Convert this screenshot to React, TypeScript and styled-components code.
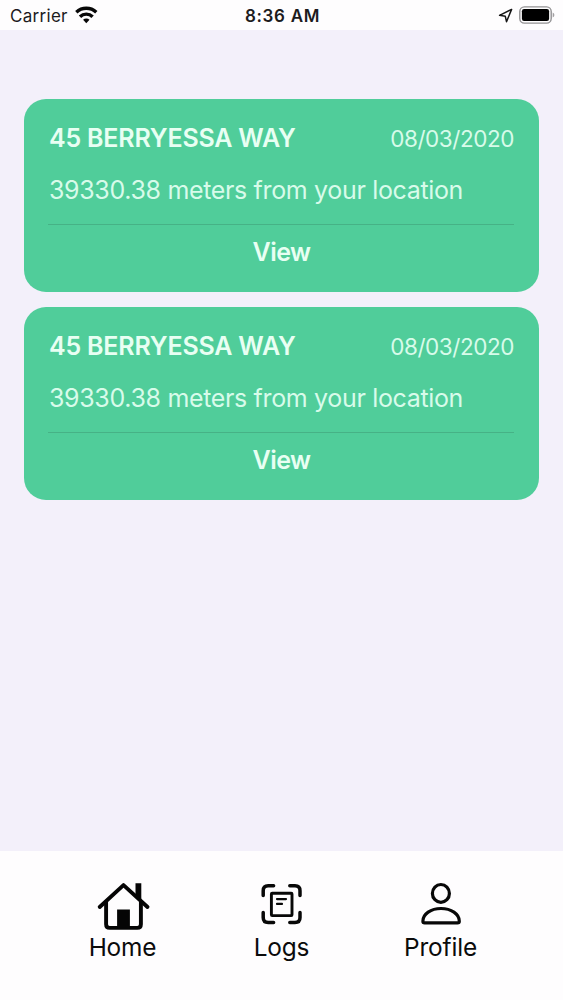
import React from "react";
import styled, { createGlobalStyle } from "styled-components";

const GlobalStyle = createGlobalStyle`
  * { box-sizing: border-box; }
  body { margin: 0; background: #f3f0fa; font-family: Inter, "Liberation Sans", sans-serif; }
`;

const Screen = styled.div`
  display: flex;
  flex-direction: column;
  width: 100%;
  height: 1000px;
  overflow: hidden;
`;

const StatusBar = styled.header`
  display: grid;
  grid-template-columns: 1fr auto 1fr;
  align-items: center;
  height: 30px;
  padding: 1px 8px 0 10px;
  background: #fefdfe;
  color: #1c1b1d;
  font-size: 17px;
  line-height: 30px;
`;

const Carrier = styled.div`
  display: flex;
  align-items: center;
  gap: 7px;
  letter-spacing: 0.3px;

  svg { margin-bottom: 2px; }
`;

const Time = styled.div`
  font-weight: 600;
  font-size: 17px;
  letter-spacing: 0.7px;
`;

const Indicators = styled.div`
  display: flex;
  justify-content: flex-end;
  align-items: center;
  gap: 6px;
  padding-bottom: 2px;
`;

const CardList = styled.main`
  flex: 1;
  display: flex;
  flex-direction: column;
  gap: 15px;
  padding: 69px 24px 0;
`;

const Card = styled.article`
  height: 193px;
  padding: 24px 25px 0 25px;
  border-radius: 22px;
  background: #50cd9a;
  color: #e8fff3;
`;

const CardHeader = styled.div`
  display: flex;
  justify-content: space-between;
  align-items: center;
  height: 30px;
`;

const Address = styled.h2`
  margin: 0;
  font-size: 25px;
  font-weight: 600;
  line-height: 30px;
  letter-spacing: -0.2px;
  white-space: nowrap;
`;

const VisitDate = styled.span`
  padding-top: 2px;
  font-size: 22.5px;
  line-height: 30px;
  letter-spacing: -0.45px;
  color: #d8fbea;
`;

const Distance = styled.p`
  margin: 22px 0 0;
  font-size: 25px;
  line-height: 30px;
  letter-spacing: -0.34px;
  white-space: nowrap;
  color: #d8fbea;
`;

const Divider = styled.hr`
  height: 1px;
  margin: 19px 0 0 -1px;
  border: 0;
  background: #46b286;
`;

const ViewButton = styled.button`
  display: block;
  width: 100%;
  margin: 12px 0 0;
  padding: 0;
  border: 0;
  background: none;
  color: inherit;
  font: 600 25px/30px Inter, "Liberation Sans", sans-serif;
  letter-spacing: -0.5px;
`;

const TabBar = styled.nav`
  display: flex;
  justify-content: center;
  height: 149px;
  padding-top: 28px;
  background: #fefdfe;
`;

const Tab = styled.a`
  display: flex;
  flex-direction: column;
  align-items: center;
  width: 159px;
  color: #0b0b0b;
  font-size: 24.4px;
  line-height: 30px;
  letter-spacing: -0.15px;
`;

const TabIcon = styled.svg`
  display: block;
  width: 56px;
  height: 54px;
  margin-bottom: -1px;
  overflow: visible;
`;

const visits = [
  { id: 1, address: "45 BERRYESSA WAY", date: "08/03/2020", meters: "39330.38" },
  { id: 2, address: "45 BERRYESSA WAY", date: "08/03/2020", meters: "39330.38" },
];

const WifiIcon = () => (
  <svg width="24" height="18" viewBox="0 0 24 18" fill="none" stroke="#080808" strokeWidth="3.4">
    <path d="M1.3 6.2a14.8 14.8 0 0 1 20 0" />
    <path d="M5 10.7a9 9 0 0 1 12.6 0" />
    <path d="M8.1 13.8a4.5 4.5 0 0 1 6.4 0l-3.2 3.4z" fill="#080808" stroke="none" />
  </svg>
);

const LocationIcon = () => (
  <svg width="15" height="15" viewBox="0 0 15 15" fill="none" stroke="#161616" strokeWidth="1.5" strokeLinejoin="round">
    <path d="M13.6 1.4 1.6 7.3l5.7 1 1.2 5.4z" />
  </svg>
);

const BatteryIcon = () => (
  <svg width="36" height="18" viewBox="0 0 36 18">
    <rect x="0.8" y="0.9" width="31.4" height="16.2" rx="4.6" fill="none" stroke="#929193" strokeWidth="1.4" />
    <rect x="2.9" y="3" width="27.2" height="12" rx="2.2" fill="#000" />
    <path d="M33.7 6.5q1.7.8 1.7 2.5t-1.7 2.5z" fill="#a2a1a3" />
  </svg>
);

const HomeIcon = () => (
  <TabIcon viewBox="0 0 56 54" fill="none" stroke="#050505" strokeWidth="3.9" strokeLinecap="round" strokeLinejoin="round">
    <path d="M4.7 28 28.5 6.1l24 21.9" />
    <path d="M11.1 23v22.3q0 3.6 3.6 3.6h27.6q3.6 0 3.6-3.6V23" />
    <path d="M40.5 4.2h5.8v19l-5.8-5.4z" fill="#050505" stroke="none" />
    <path d="M22.1 30.5h12.8V49H22.1z" fill="#050505" stroke="none" />
  </TabIcon>
);

const LogsIcon = () => (
  <TabIcon viewBox="0 0 56 54" fill="none" stroke="#080808" strokeWidth="3.5" strokeLinecap="round" strokeLinejoin="round">
    <path d="M9.2 16.5v-4.8q0-5 5-5h5.4M35.8 6.7h5.2q5 0 5 5v4.8M9.2 33.5v5q0 5 5 5h5.4M35.8 43.5h5.2q5 0 5-5v-5" />
    <rect x="17.4" y="14.2" width="20.6" height="22.4" rx="0.8" strokeWidth="2.9" />
    <path d="M23 20.1h9M23 24.9h5" strokeWidth="2.2" />
  </TabIcon>
);

const ProfileIcon = () => (
  <TabIcon viewBox="0 0 56 54" fill="none" stroke="#080808" strokeWidth="3.2" strokeLinejoin="round">
    <ellipse cx="27.9" cy="14.4" rx="8.5" ry="8.9" />
    <path d="M9.9 42.2C9.9 35 17.9 29.5 28 29.5S46.3 35 46.3 42.2q0 1.7-1.8 1.7H11.7q-1.8 0-1.8-1.7z" />
  </TabIcon>
);

const tabs = [
  { label: "Home", Icon: HomeIcon },
  { label: "Logs", Icon: LogsIcon },
  { label: "Profile", Icon: ProfileIcon },
];

export default function App() {
  return (
    <Screen>
      <GlobalStyle />
      <StatusBar>
        <Carrier>
          <span>Carrier</span>
          <WifiIcon />
        </Carrier>
        <Time>8:36 AM</Time>
        <Indicators>
          <LocationIcon />
          <BatteryIcon />
        </Indicators>
      </StatusBar>
      <CardList>
        {visits.map((visit) => (
          <Card key={visit.id}>
            <CardHeader>
              <Address>{visit.address}</Address>
              <VisitDate>{visit.date}</VisitDate>
            </CardHeader>
            <Distance>{visit.meters} meters from your location</Distance>
            <Divider />
            <ViewButton>View</ViewButton>
          </Card>
        ))}
      </CardList>
      <TabBar>
        {tabs.map(({ label, Icon }) => (
          <Tab key={label}>
            <Icon />
            {label}
          </Tab>
        ))}
      </TabBar>
    </Screen>
  );
}
